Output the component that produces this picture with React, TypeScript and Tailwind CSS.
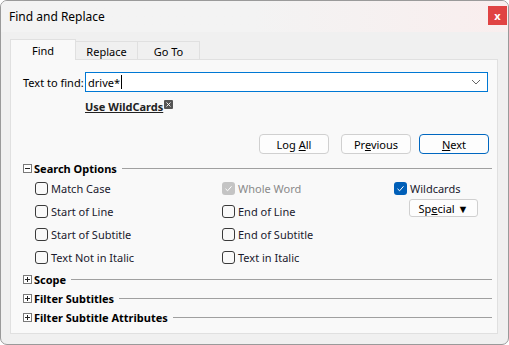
import React from "react";

const font = { fontFamily: '"Segoe UI", "Noto Sans", "Open Sans", sans-serif' };

function Box({ state }: { state: "off" | "on" | "disabled" }) {
  if (state === "off")
    return <div className="w-[13px] h-[13px] rounded-[3px] border border-[#3a3a3a] bg-[#f9f9f9] shrink-0" />;
  const bg = state === "on" ? "bg-[#005fb8]" : "bg-[#c4c4c4]";
  return (
    <div className={`w-[13px] h-[13px] rounded-[3px] ${bg} shrink-0 flex items-center justify-center`}>
      <svg width="9" height="9" viewBox="0 0 9 9">
        <path d="M1.5 4.8 L3.6 6.8 L7.5 2.3" fill="none" stroke="white" strokeWidth="1" />
      </svg>
    </div>
  );
}

function Check({ label, state = "off" }: { label: string; state?: "off" | "on" | "disabled" }) {
  return (
    <div className="flex items-center gap-[3px] h-[23px]">
      <Box state={state} />
      <span className={`whitespace-nowrap ${state === "disabled" ? "text-[#8a8a8a]" : "text-[#1a1a2e]"}`}>{label}</span>
    </div>
  );
}

function Section({ label, open = false, h }: { label: string; open?: boolean; h: string }) {
  return (
    <div className={`flex items-center ${h}`}>
      <div className="w-[9px] h-[9px] border border-[#7a7a7a] bg-white flex items-center justify-center shrink-0">
        <svg width="7" height="7" viewBox="0 0 7 7">
          <path d="M1 3.5 H6" stroke="#222" strokeWidth="1" />
          {!open && <path d="M3.5 1 V6" stroke="#222" strokeWidth="1" />}
        </svg>
      </div>
      <span className="ml-[2px] font-bold text-black whitespace-nowrap">{label}</span>
      <div className="flex-1 ml-[5px] h-px bg-[#a0a0a0]" />
    </div>
  );
}

function Btn({ children, primary = false, w = "w-[70px]" }: { children: React.ReactNode; primary?: boolean; w?: string }) {
  return (
    <div
      className={`${w} h-[20px] rounded-[4px] bg-[#fdfdfd] border ${
        primary ? "border-[#0067c0]" : "border-[#d0d0d0]"
      } flex items-center justify-center text-black`}
    >
      {children}
    </div>
  );
}

export default function App() {
  return (
    <div
      style={font}
      className="w-[509px] h-[345px] bg-[#f0f0f0] border border-[#9a9a9a] rounded-b-[7px] rounded-t-[7px] overflow-hidden text-[11px] leading-none flex flex-col"
    >
      <div className="h-[31px] flex items-center pl-[8px] pr-[1px] bg-gradient-to-r from-[#f3f3f3] via-[#f3f3f3] to-[#f9eeee]">
        <span className="flex-1 text-[12px] text-black">Find and Replace</span>
        <div className="w-[19px] h-[19px] bg-[#e04343] flex items-center justify-center text-white font-bold text-[11px] mt-[-2px]">
          x
        </div>
      </div>
      <div className="pl-[9px] pt-[7px]">
        <div className="flex items-end h-[21px]">
          <div className="w-[66px] h-[21px] bg-[#f9f9f9] border border-b-0 border-[#e0e0e0] flex items-center justify-center text-black relative z-10">
            Find
          </div>
          <div className="w-[62px] h-[19px] bg-[#f0f0f0] border border-l-0 border-[#e0e0e0] flex items-center justify-center text-black pt-[2px]">
            Replace
          </div>
          <div className="w-[62px] h-[19px] bg-[#f0f0f0] border border-l-0 border-[#e0e0e0] flex items-center justify-center text-black pt-[2px]">
            Go To
          </div>
        </div>
        <div className="w-[488px] h-[275px] -mt-px bg-[#f9f9f9] border border-[#e0e0e0] pl-[12px] pr-[5px] pt-[12px]">
          <div className="flex items-center h-[20px]">
            <span className="w-[62px] text-black whitespace-nowrap">Text to find:</span>
            <div className="w-[403px] h-[20px] bg-white border border-[#0078d4] flex items-center pl-[2px] pr-[6px]">
              <span className="text-black">drive*</span>
              <div className="w-px h-[14px] bg-black ml-[1px]" />
              <div className="flex-1" />
              <svg width="10" height="6" viewBox="0 0 10 6">
                <path d="M1 1 L5 5 L9 1" fill="none" stroke="#666" strokeWidth="1" />
              </svg>
            </div>
          </div>
          <div className="flex items-center h-[26px] pl-[62px] pt-[2px]">
            <span className="font-bold underline text-[#222] whitespace-nowrap">Use WildCards</span>
            <div className="w-[9px] h-[9px] bg-[#555] rounded-[1px] flex items-center justify-center ml-[1px] mb-[4px]">
              <svg width="7" height="7" viewBox="0 0 7 7">
                <path d="M1.5 1.5 L5.5 5.5 M5.5 1.5 L1.5 5.5" stroke="white" strokeWidth="0.9" />
              </svg>
            </div>
          </div>
          <div className="flex justify-end gap-[12px] h-[20px] mt-[16px] pr-[3px]">
            <Btn>
              <span>
                Log <u>A</u>ll
              </span>
            </Btn>
            <div className="flex gap-[8px]">
              <Btn>
                <span>
                  Pr<u>e</u>vious
                </span>
              </Btn>
              <Btn primary>
                <span>
                  <u>N</u>ext
                </span>
              </Btn>
            </div>
          </div>
          <div className="mt-[6px]">
            <Section label="Search Options" open h="h-[17px]" />
          </div>
          <div className="flex pl-[12px]">
            <div className="w-[187px] flex flex-col">
              <Check label="Match Case" />
              <Check label="Start of Line" />
              <Check label="Start of Subtitle" />
              <Check label="Text Not in Italic" />
            </div>
            <div className="w-[172px] flex flex-col">
              <Check label="Whole Word" state="disabled" />
              <Check label="End of Line" />
              <Check label="End of Subtitle" />
              <Check label="Text in Italic" />
            </div>
            <div className="flex flex-col">
              <Check label="Wildcards" state="on" />
              <div className="ml-[15px] mt-[-1px] w-[69px] h-[18px] rounded-[3px] border border-[#d0d0d0] bg-[#fdfdfd] flex items-center justify-center text-black">
                Sp<u>e</u>cial ▼
              </div>
            </div>
          </div>
          <div className="mt-[1px] flex flex-col">
            <Section label="Scope" h="h-[19px]" />
            <Section label="Filter Subtitles" h="h-[19px]" />
            <Section label="Filter Subtitle Attributes" h="h-[19px]" />
          </div>
        </div>
      </div>
    </div>
  );
}
